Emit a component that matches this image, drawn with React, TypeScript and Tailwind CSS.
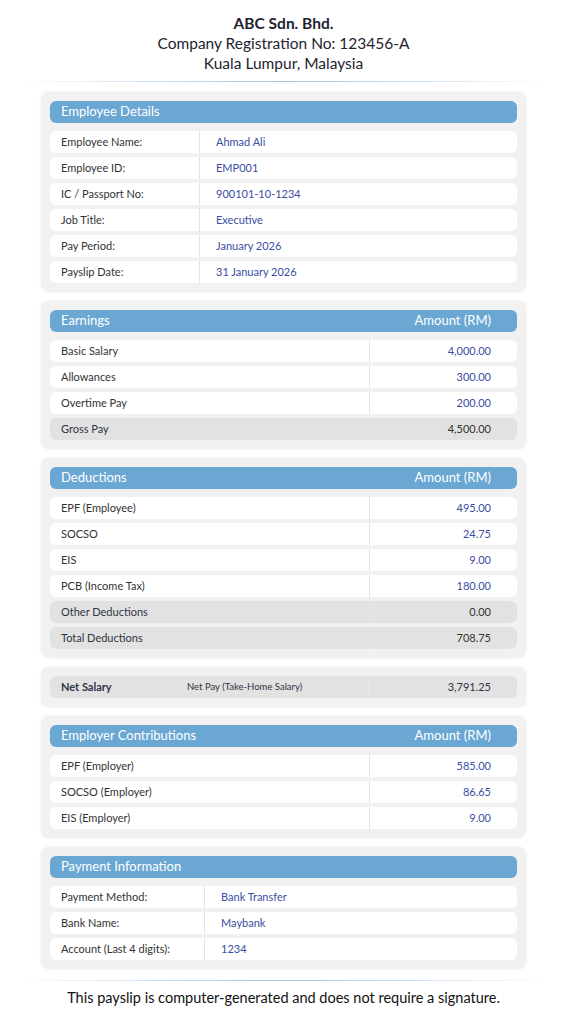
const font = { fontFamily: "Lato, 'Noto Sans', sans-serif" };

type Row = { label: string; value: string; gray?: boolean; bold?: boolean };

function Card({ children }: { children: React.ReactNode }) {
  return (
    <div className="mx-[41px] rounded-lg bg-[#f1f1f1] px-[9px] py-[9px] shadow-[0_0_3px_rgba(0,0,0,0.08)]">
      {children}
    </div>
  );
}

function Header({ title, right }: { title: string; right?: string }) {
  return (
    <div className="mb-[8px] flex h-[22px] items-center justify-between rounded-md bg-[#6aa7d3] px-[11px] text-[13px] text-white">
      <span>{title}</span>
      {right ? <span className="pr-[15px]">{right}</span> : null}
    </div>
  );
}

function InfoTable({ rows, labelW }: { rows: Row[]; labelW: string }) {
  return (
    <div className="flex flex-col gap-[4px]">
      {rows.map((r) => (
        <div key={r.label} className="flex h-[22px] items-center rounded-md bg-white text-[11px]">
          <div className={`${labelW} flex h-full items-center border-r border-[#e4e4e4] pl-[11px] text-[#333]`}>{r.label}</div>
          <div className="pl-[16px] text-[#3a4ea3]">{r.value}</div>
        </div>
      ))}
    </div>
  );
}

function AmountTable({ rows }: { rows: Row[] }) {
  return (
    <div className="flex flex-col gap-[4px]">
      {rows.map((r) => (
        <div
          key={r.label}
          className={`flex h-[22px] items-center rounded-md text-[11px] ${r.gray ? "bg-[#e2e2e2]" : "bg-white"}`}
        >
          <div className={`flex h-full flex-1 items-center border-r border-[#e4e4e4] pl-[11px] ${r.gray ? "text-[#2f3542]" : "text-[#333]"}`}>
            {r.label}
          </div>
          <div className={`w-[147px] pr-[26px] text-right ${r.gray ? "text-[#333]" : "text-[#3a4ea3]"}`}>{r.value}</div>
        </div>
      ))}
    </div>
  );
}

export default function App() {
  return (
    <div className="min-h-[1024px] bg-white pb-4" style={font}>
      <div className="pt-[13px] text-center text-[15.5px] leading-[20px] text-[#1f2330]">
        <div className="font-bold">ABC Sdn. Bhd.</div>
        <div>Company Registration No: 123456-A</div>
        <div>Kuala Lumpur, Malaysia</div>
      </div>
      <div className="mx-[20px] mt-[8px] h-px bg-gradient-to-r from-transparent via-[#9ec3e6] to-transparent" />
      <div className="mt-[10px] flex flex-col gap-[9px]">
        <Card>
          <Header title="Employee Details" />
          <InfoTable
            labelW="w-[150px]"
            rows={[
              { label: "Employee Name:", value: "Ahmad Ali" },
              { label: "Employee ID:", value: "EMP001" },
              { label: "IC / Passport No:", value: "900101-10-1234" },
              { label: "Job Title:", value: "Executive" },
              { label: "Pay Period:", value: "January 2026" },
              { label: "Payslip Date:", value: "31 January 2026" },
            ]}
          />
        </Card>
        <Card>
          <Header title="Earnings" right="Amount (RM)" />
          <AmountTable
            rows={[
              { label: "Basic Salary", value: "4,000.00" },
              { label: "Allowances", value: "300.00" },
              { label: "Overtime Pay", value: "200.00" },
              { label: "Gross Pay", value: "4,500.00", gray: true },
            ]}
          />
        </Card>
        <Card>
          <Header title="Deductions" right="Amount (RM)" />
          <AmountTable
            rows={[
              { label: "EPF (Employee)", value: "495.00" },
              { label: "SOCSO", value: "24.75" },
              { label: "EIS", value: "9.00" },
              { label: "PCB (Income Tax)", value: "180.00" },
              { label: "Other Deductions", value: "0.00", gray: true },
              { label: "Total Deductions", value: "708.75", gray: true },
            ]}
          />
        </Card>
        <Card>
          <div className="flex h-[22px] items-center rounded-md bg-[#e2e2e2] text-[11px] text-[#2f3542]">
            <div className="flex h-full flex-1 items-center border-r border-[#ececec] pl-[11px]">
              <span className="w-[126px] font-bold">Net Salary</span>
              <span className="text-[9.5px]">Net Pay (Take-Home Salary)</span>
            </div>
            <div className="w-[147px] pr-[26px] text-right">3,791.25</div>
          </div>
        </Card>
        <Card>
          <Header title="Employer Contributions" right="Amount (RM)" />
          <AmountTable
            rows={[
              { label: "EPF (Employer)", value: "585.00" },
              { label: "SOCSO (Employer)", value: "86.65" },
              { label: "EIS (Employer)", value: "9.00" },
            ]}
          />
        </Card>
        <Card>
          <Header title="Payment Information" />
          <InfoTable
            labelW="w-[155px]"
            rows={[
              { label: "Payment Method:", value: "Bank Transfer" },
              { label: "Bank Name:", value: "Maybank" },
              { label: "Account (Last 4 digits):", value: "1234" },
            ]}
          />
        </Card>
      </div>
      <div className="mx-[20px] mt-[11px] h-px bg-gradient-to-r from-transparent via-[#9ec3e6] to-transparent" />
      <div className="mt-[6px] text-center text-[14.5px] text-[#111]">
        This payslip is computer-generated and does not require a signature.
      </div>
    </div>
  );
}
